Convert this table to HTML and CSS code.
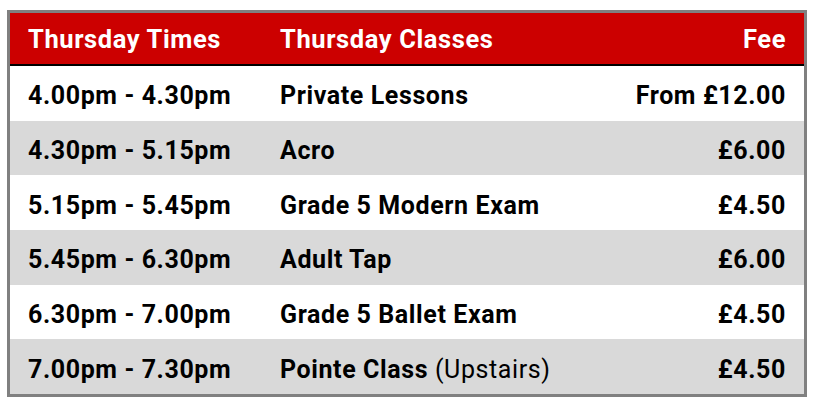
FILE: index.html
```html
<!DOCTYPE html>
<html>
<head>
<meta charset="utf-8">
<link rel="stylesheet" href="styles.css">
</head>
<body>
<div class="timetable">
  <div class="row head">
    <div>Thursday Times</div>
    <div>Thursday Classes</div>
    <div class="fee">Fee</div>
  </div>
  <div class="row">
    <div>4.00pm - 4.30pm</div>
    <div>Private Lessons</div>
    <div class="fee">From £12.00</div>
  </div>
  <div class="row alt">
    <div>4.30pm - 5.15pm</div>
    <div>Acro</div>
    <div class="fee">£6.00</div>
  </div>
  <div class="row">
    <div>5.15pm - 5.45pm</div>
    <div>Grade 5 Modern Exam</div>
    <div class="fee">£4.50</div>
  </div>
  <div class="row alt">
    <div>5.45pm - 6.30pm</div>
    <div>Adult Tap</div>
    <div class="fee">£6.00</div>
  </div>
  <div class="row">
    <div>6.30pm - 7.00pm</div>
    <div>Grade 5 Ballet Exam</div>
    <div class="fee">£4.50</div>
  </div>
  <div class="row alt">
    <div>7.00pm - 7.30pm</div>
    <div>Pointe Class <span class="note">(Upstairs)</span></div>
    <div class="fee">£4.50</div>
  </div>
</div>
</body>
</html>
```
FILE: styles.css
```css
html, body {
  margin: 0;
  background: #ffffff;
}
body {
  padding: 10px 7px;
  font-family: Roboto, "Liberation Sans", sans-serif;
}
.timetable {
  width: 800px;
  box-sizing: border-box;
  border: 3px solid #808080;
}
.row {
  display: grid;
  grid-template-columns: 252px 1fr auto;
  align-items: center;
  box-sizing: border-box;
  height: 54.67px;
  padding: 5px 18px 0;
  font-size: 25px;
  letter-spacing: 0.6px;
  font-weight: 700;
  color: #000;
  background: #fff;
}
.row.alt {
  background: #d9d9d9;
}
.row.head {
  height: 53px;
  padding-top: 0;
  font-size: 25.5px;
  background: #cc0000;
  color: #fff;
  border-bottom: 2px solid #000;
}
.fee {
  text-align: right;
}
.note {
  font-weight: 400;
}
```
